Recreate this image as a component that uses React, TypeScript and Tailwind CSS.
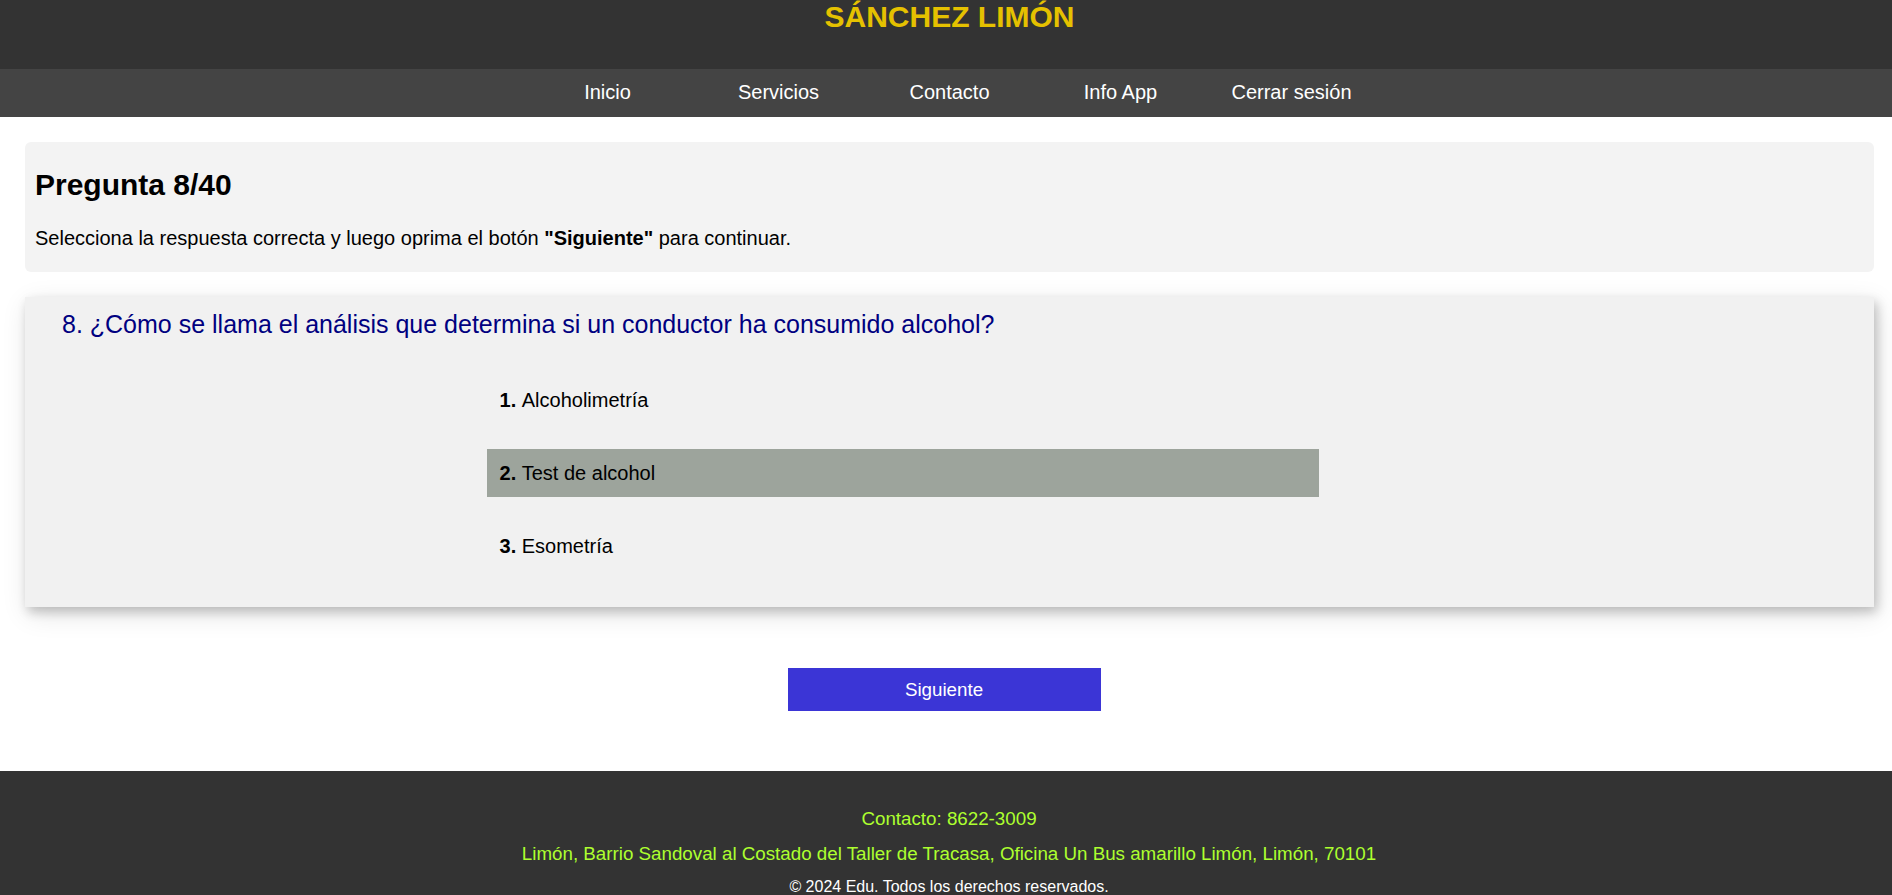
import React, { useState } from 'react';

const navItems = ['Inicio', 'Servicios', 'Contacto', 'Info App', 'Cerrar sesión'];

const options = ['Alcoholimetría', 'Test de alcohol', 'Esometría'];

export default function App() {
  const [selected, setSelected] = useState(1);

  return (
    <div className="min-h-screen bg-white font-['Liberation_Sans',Arial,sans-serif] text-black">
      {/* Header */}
      <header className="h-[69px] bg-[#333333] pl-[7px] text-center">
        <h1 className="text-[30px] font-bold leading-[34.5px] text-[#e5c100]">SÁNCHEZ LIMÓN</h1>
      </header>

      <nav className="flex h-[48px] items-center justify-center bg-[#444444] pb-[2px] pl-[7px]">
        {navItems.map((item) => (
          <a key={item} href="#" className="w-[171px] text-center text-[20px] leading-[23px] text-white">
            {item}
          </a>
        ))}
      </nav>

      <main className="pl-[25px] pr-[18px] pt-[25px]">
        {/* Progress card */}
        <div className="rounded-[6px] bg-[#f3f3f3] px-[10px] pb-[22px] pt-[26px]">
          <h2 className="text-[30px] font-bold leading-[34.5px]">Pregunta 8/40</h2>
          <p className="mt-[24px] text-[20px] leading-[23px]">
            Selecciona la respuesta correcta y luego oprima el botón <b>"Siguiente"</b> para continuar.
          </p>
        </div>

        {/* Question card */}
        <div className="mt-[25px] bg-[#f1f1f1] pb-[37px] pl-[37px] pt-[13px] shadow-[3px_5px_10px_rgba(0,0,0,0.2),3px_7px_25px_rgba(0,0,0,0.12)]">
          <h3 className="text-[25px] leading-[28.75px] text-[#000080]">
            8. ¿Cómo se llama el análisis que determina si un conductor ha consumido alcohol?
          </h3>
          <div className="ml-[425px] mt-[38px] flex w-[832px] flex-col gap-[25px]">
            {options.map((opt, i) => (
              <div
                key={opt}
                onClick={() => setSelected(i)}
                className={`flex h-[48px] cursor-pointer items-center px-[12.5px] text-[20px] leading-[23px] ${
                  selected === i ? 'bg-[#9da49c]' : ''
                }`}
              >
                <b>{i + 1}.</b>&nbsp;{opt}
              </div>
            ))}
          </div>
        </div>

        <div className="mt-[61px] flex justify-center pr-[11px]">
          <button className="h-[43px] w-[313px] bg-[#3b35d6] text-[18.75px] text-white">Siguiente</button>
        </div>
      </main>

      {/* Footer */}
      <footer className="mt-[60px] bg-[#333333] pb-[20px] pl-[6px] pt-[37px] text-center">
        <p className="text-[18.75px] leading-[21.6px] text-[#adff2f]">Contacto: 8622-3009</p>
        <p className="mt-[12.7px] text-[18.75px] leading-[21.6px] text-[#adff2f]">
          Limón, Barrio Sandoval al Costado del Taller de Tracasa, Oficina Un Bus amarillo Limón, Limón, 70101
        </p>
        <p className="mt-[13.4px] text-[16px] leading-[18.4px] text-white">© 2024 Edu. Todos los derechos reservados.</p>
      </footer>
    </div>
  );
}
